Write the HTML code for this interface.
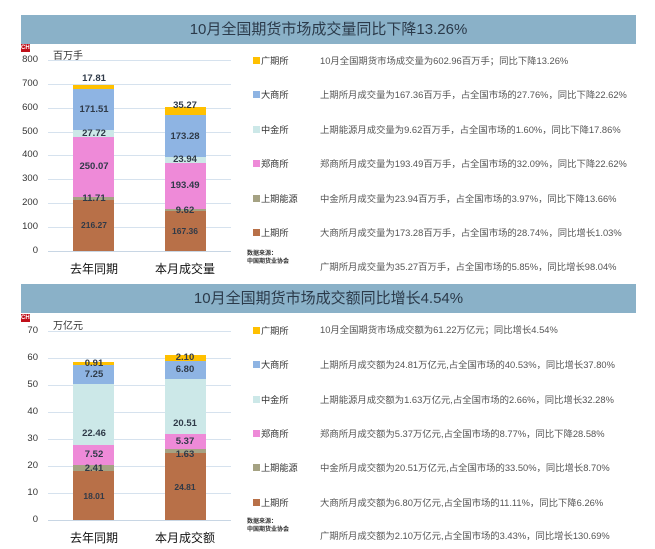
<!DOCTYPE html>
<html><head><meta charset="utf-8"><style>
*{margin:0;padding:0;box-sizing:border-box}
body{width:655px;height:549px;background:#fff;position:relative;overflow:hidden;font-family:"Liberation Sans","Noto Sans CJK SC",sans-serif;color:#333}
.a{position:absolute}
.title{position:absolute;left:21px;width:615px;background:#8AB1C8;color:#2b3a4a;font-size:15px;text-align:center;line-height:29px;height:29px}
.logo{position:absolute;left:21px;width:9px;height:8px;background:#c0101a;color:#fff;font-size:6px;line-height:8px;text-align:center;font-weight:bold}
.g{position:absolute;left:48px;width:183px;height:1px;background:#d6e2ee}
.yl{position:absolute;left:0;width:38px;text-align:right;font-size:9.5px;color:#333;line-height:10px}
.seg{position:absolute;width:41px}
.lb{position:absolute;width:60px;text-align:center;font-size:9.5px;font-weight:bold;color:#2f3a48;line-height:10px}
.cat{position:absolute;font-size:12px;color:#111;width:90px;text-align:center}
.lg{position:absolute;left:253px;font-size:9.2px;color:#333;line-height:10px}
.lg i{display:inline-block;width:7px;height:7px;margin-right:1px;vertical-align:-0px}
.ds{position:absolute;left:320px;font-size:9.35px;color:#555;line-height:10px;white-space:nowrap}
.src{position:absolute;left:247px;font-size:6px;font-weight:bold;color:#333;line-height:8px}
</style></head><body>

<div class="title" style="top:15px">10月全国期货市场成交量同比下降13.26%</div>
<div class="logo" style="top:44px">CHI</div>
<div class="a" style="left:53px;top:47px;font-size:10px">百万手</div>
<div class="g" style="top:60px"></div><div class="g" style="top:84px"></div><div class="g" style="top:108px"></div><div class="g" style="top:132px"></div><div class="g" style="top:155px"></div><div class="g" style="top:179px"></div><div class="g" style="top:203px"></div><div class="g" style="top:227px"></div><div class="g" style="top:251px;background:#c8d6e4"></div>
<div class="yl" style="top:55px">800</div><div class="yl" style="top:79px">700</div><div class="yl" style="top:103px">600</div><div class="yl" style="top:127px">500</div><div class="yl" style="top:150px">400</div><div class="yl" style="top:174px">300</div><div class="yl" style="top:198px">200</div><div class="yl" style="top:222px">100</div><div class="yl" style="top:246px">0</div>

<div class="seg" style="left:73px;top:85px;height:4px;background:#FFC000"></div>
<div class="seg" style="left:73px;top:89px;height:41px;background:#8EB4E3"></div>
<div class="seg" style="left:73px;top:130px;height:7px;background:#CCE8E8"></div>
<div class="seg" style="left:73px;top:137px;height:60px;background:#EE8AD8"></div>
<div class="seg" style="left:73px;top:197px;height:3px;background:#A5A283"></div>
<div class="seg" style="left:73px;top:200px;height:51px;background:#B87048"></div>
<div class="seg" style="left:165px;top:107px;height:8px;background:#FFC000"></div>
<div class="seg" style="left:165px;top:115px;height:42px;background:#8EB4E3"></div>
<div class="seg" style="left:165px;top:157px;height:6px;background:#CCE8E8"></div>
<div class="seg" style="left:165px;top:163px;height:46px;background:#EE8AD8"></div>
<div class="seg" style="left:165px;top:209px;height:2px;background:#A5A283"></div>
<div class="seg" style="left:165px;top:211px;height:40px;background:#B87048"></div>

<div class="lb" style="left:64px;top:74px">17.81</div>
<div class="lb" style="left:64px;top:105px">171.51</div>
<div class="lb" style="left:64px;top:129px">27.72</div>
<div class="lb" style="left:64px;top:162px">250.07</div>
<div class="lb" style="left:64px;top:194px">11.71</div>
<div class="lb" style="left:64px;top:220px;font-size:8.5px">216.27</div>
<div class="lb" style="left:155px;top:101px">35.27</div>
<div class="lb" style="left:155px;top:132px">173.28</div>
<div class="lb" style="left:155px;top:155px">23.94</div>
<div class="lb" style="left:155px;top:181px">193.49</div>
<div class="lb" style="left:155px;top:206px">9.62</div>
<div class="lb" style="left:155px;top:226px;font-size:8.5px">167.36</div>
<div class="cat" style="left:49px;top:260px">去年同期</div>
<div class="cat" style="left:140px;top:260px">本月成交量</div>

<div class="lg" style="top:56px"><i style="background:#FFC000"></i>广期所</div>
<div class="lg" style="top:90px"><i style="background:#8EB4E3"></i>大商所</div>
<div class="lg" style="top:125px"><i style="background:#CCE8E8"></i>中金所</div>
<div class="lg" style="top:159px"><i style="background:#EE8AD8"></i>郑商所</div>
<div class="lg" style="top:194px"><i style="background:#A5A283"></i>上期能源</div>
<div class="lg" style="top:228px"><i style="background:#B87048"></i>上期所</div>
<div class="src" style="top:250px">数据来源：<br>中国期货业协会</div>
<div class="ds" style="top:56px">10月全国期货市场成交量为602.96百万手；同比下降13.26%</div>
<div class="ds" style="top:90px">上期所月成交量为167.36百万手，占全国市场的27.76%，同比下降22.62%</div>
<div class="ds" style="top:125px">上期能源月成交量为9.62百万手，占全国市场的1.60%，同比下降17.86%</div>
<div class="ds" style="top:159px">郑商所月成交量为193.49百万手，占全国市场的32.09%，同比下降22.62%</div>
<div class="ds" style="top:194px">中金所月成交量为23.94百万手，占全国市场的3.97%，同比下降13.66%</div>
<div class="ds" style="top:228px">大商所月成交量为173.28百万手，占全国市场的28.74%，同比增长1.03%</div>
<div class="ds" style="top:262px">广期所月成交量为35.27百万手，占全国市场的5.85%，同比增长98.04%</div>

<div class="title" style="top:284px">10月全国期货市场成交额同比增长4.54%</div>
<div class="logo" style="top:314px">CHI</div>
<div class="a" style="left:53px;top:317px;font-size:10px">万亿元</div>
<div class="g" style="top:331px"></div><div class="g" style="top:358px"></div><div class="g" style="top:385px"></div><div class="g" style="top:412px"></div><div class="g" style="top:439px"></div><div class="g" style="top:466px"></div><div class="g" style="top:493px"></div><div class="g" style="top:520px;background:#c8d6e4"></div>
<div class="yl" style="top:326px">70</div><div class="yl" style="top:353px">60</div><div class="yl" style="top:380px">50</div><div class="yl" style="top:407px">40</div><div class="yl" style="top:434px">30</div><div class="yl" style="top:461px">20</div><div class="yl" style="top:488px">10</div><div class="yl" style="top:515px">0</div>

<div class="seg" style="left:73px;top:362px;height:3px;background:#FFC000"></div>
<div class="seg" style="left:73px;top:365px;height:19px;background:#8EB4E3"></div>
<div class="seg" style="left:73px;top:384px;height:61px;background:#CCE8E8"></div>
<div class="seg" style="left:73px;top:445px;height:20px;background:#EE8AD8"></div>
<div class="seg" style="left:73px;top:465px;height:6px;background:#A5A283"></div>
<div class="seg" style="left:73px;top:471px;height:49px;background:#B87048"></div>
<div class="seg" style="left:165px;top:355px;height:6px;background:#FFC000"></div>
<div class="seg" style="left:165px;top:361px;height:18px;background:#8EB4E3"></div>
<div class="seg" style="left:165px;top:379px;height:55px;background:#CCE8E8"></div>
<div class="seg" style="left:165px;top:434px;height:15px;background:#EE8AD8"></div>
<div class="seg" style="left:165px;top:449px;height:4px;background:#A5A283"></div>
<div class="seg" style="left:165px;top:453px;height:67px;background:#B87048"></div>

<div class="lb" style="left:64px;top:359px">0.91</div>
<div class="lb" style="left:64px;top:370px">7.25</div>
<div class="lb" style="left:64px;top:429px">22.46</div>
<div class="lb" style="left:64px;top:450px">7.52</div>
<div class="lb" style="left:64px;top:464px">2.41</div>
<div class="lb" style="left:64px;top:491px;font-size:8.5px">18.01</div>
<div class="lb" style="left:155px;top:353px">2.10</div>
<div class="lb" style="left:155px;top:365px">6.80</div>
<div class="lb" style="left:155px;top:419px">20.51</div>
<div class="lb" style="left:155px;top:437px">5.37</div>
<div class="lb" style="left:155px;top:450px">1.63</div>
<div class="lb" style="left:155px;top:482px;font-size:8.5px">24.81</div>
<div class="cat" style="left:49px;top:529px">去年同期</div>
<div class="cat" style="left:140px;top:529px">本月成交额</div>

<div class="lg" style="top:326px"><i style="background:#FFC000"></i>广期所</div>
<div class="lg" style="top:360px"><i style="background:#8EB4E3"></i>大商所</div>
<div class="lg" style="top:395px"><i style="background:#CCE8E8"></i>中金所</div>
<div class="lg" style="top:429px"><i style="background:#EE8AD8"></i>郑商所</div>
<div class="lg" style="top:463px"><i style="background:#A5A283"></i>上期能源</div>
<div class="lg" style="top:498px"><i style="background:#B87048"></i>上期所</div>
<div class="src" style="top:518px">数据来源：<br>中国期货业协会</div>
<div class="ds" style="top:325px">10月全国期货市场成交额为61.22万亿元；同比增长4.54%</div>
<div class="ds" style="top:360px">上期所月成交额为24.81万亿元,占全国市场的40.53%，同比增长37.80%</div>
<div class="ds" style="top:395px">上期能源月成交额为1.63万亿元,占全国市场的2.66%，同比增长32.28%</div>
<div class="ds" style="top:429px">郑商所月成交额为5.37万亿元,占全国市场的8.77%，同比下降28.58%</div>
<div class="ds" style="top:463px">中金所月成交额为20.51万亿元,占全国市场的33.50%，同比增长8.70%</div>
<div class="ds" style="top:498px">大商所月成交额为6.80万亿元,占全国市场的11.11%，同比下降6.26%</div>
<div class="ds" style="top:531px">广期所月成交额为2.10万亿元,占全国市场的3.43%，同比增长130.69%</div>
</body></html>
